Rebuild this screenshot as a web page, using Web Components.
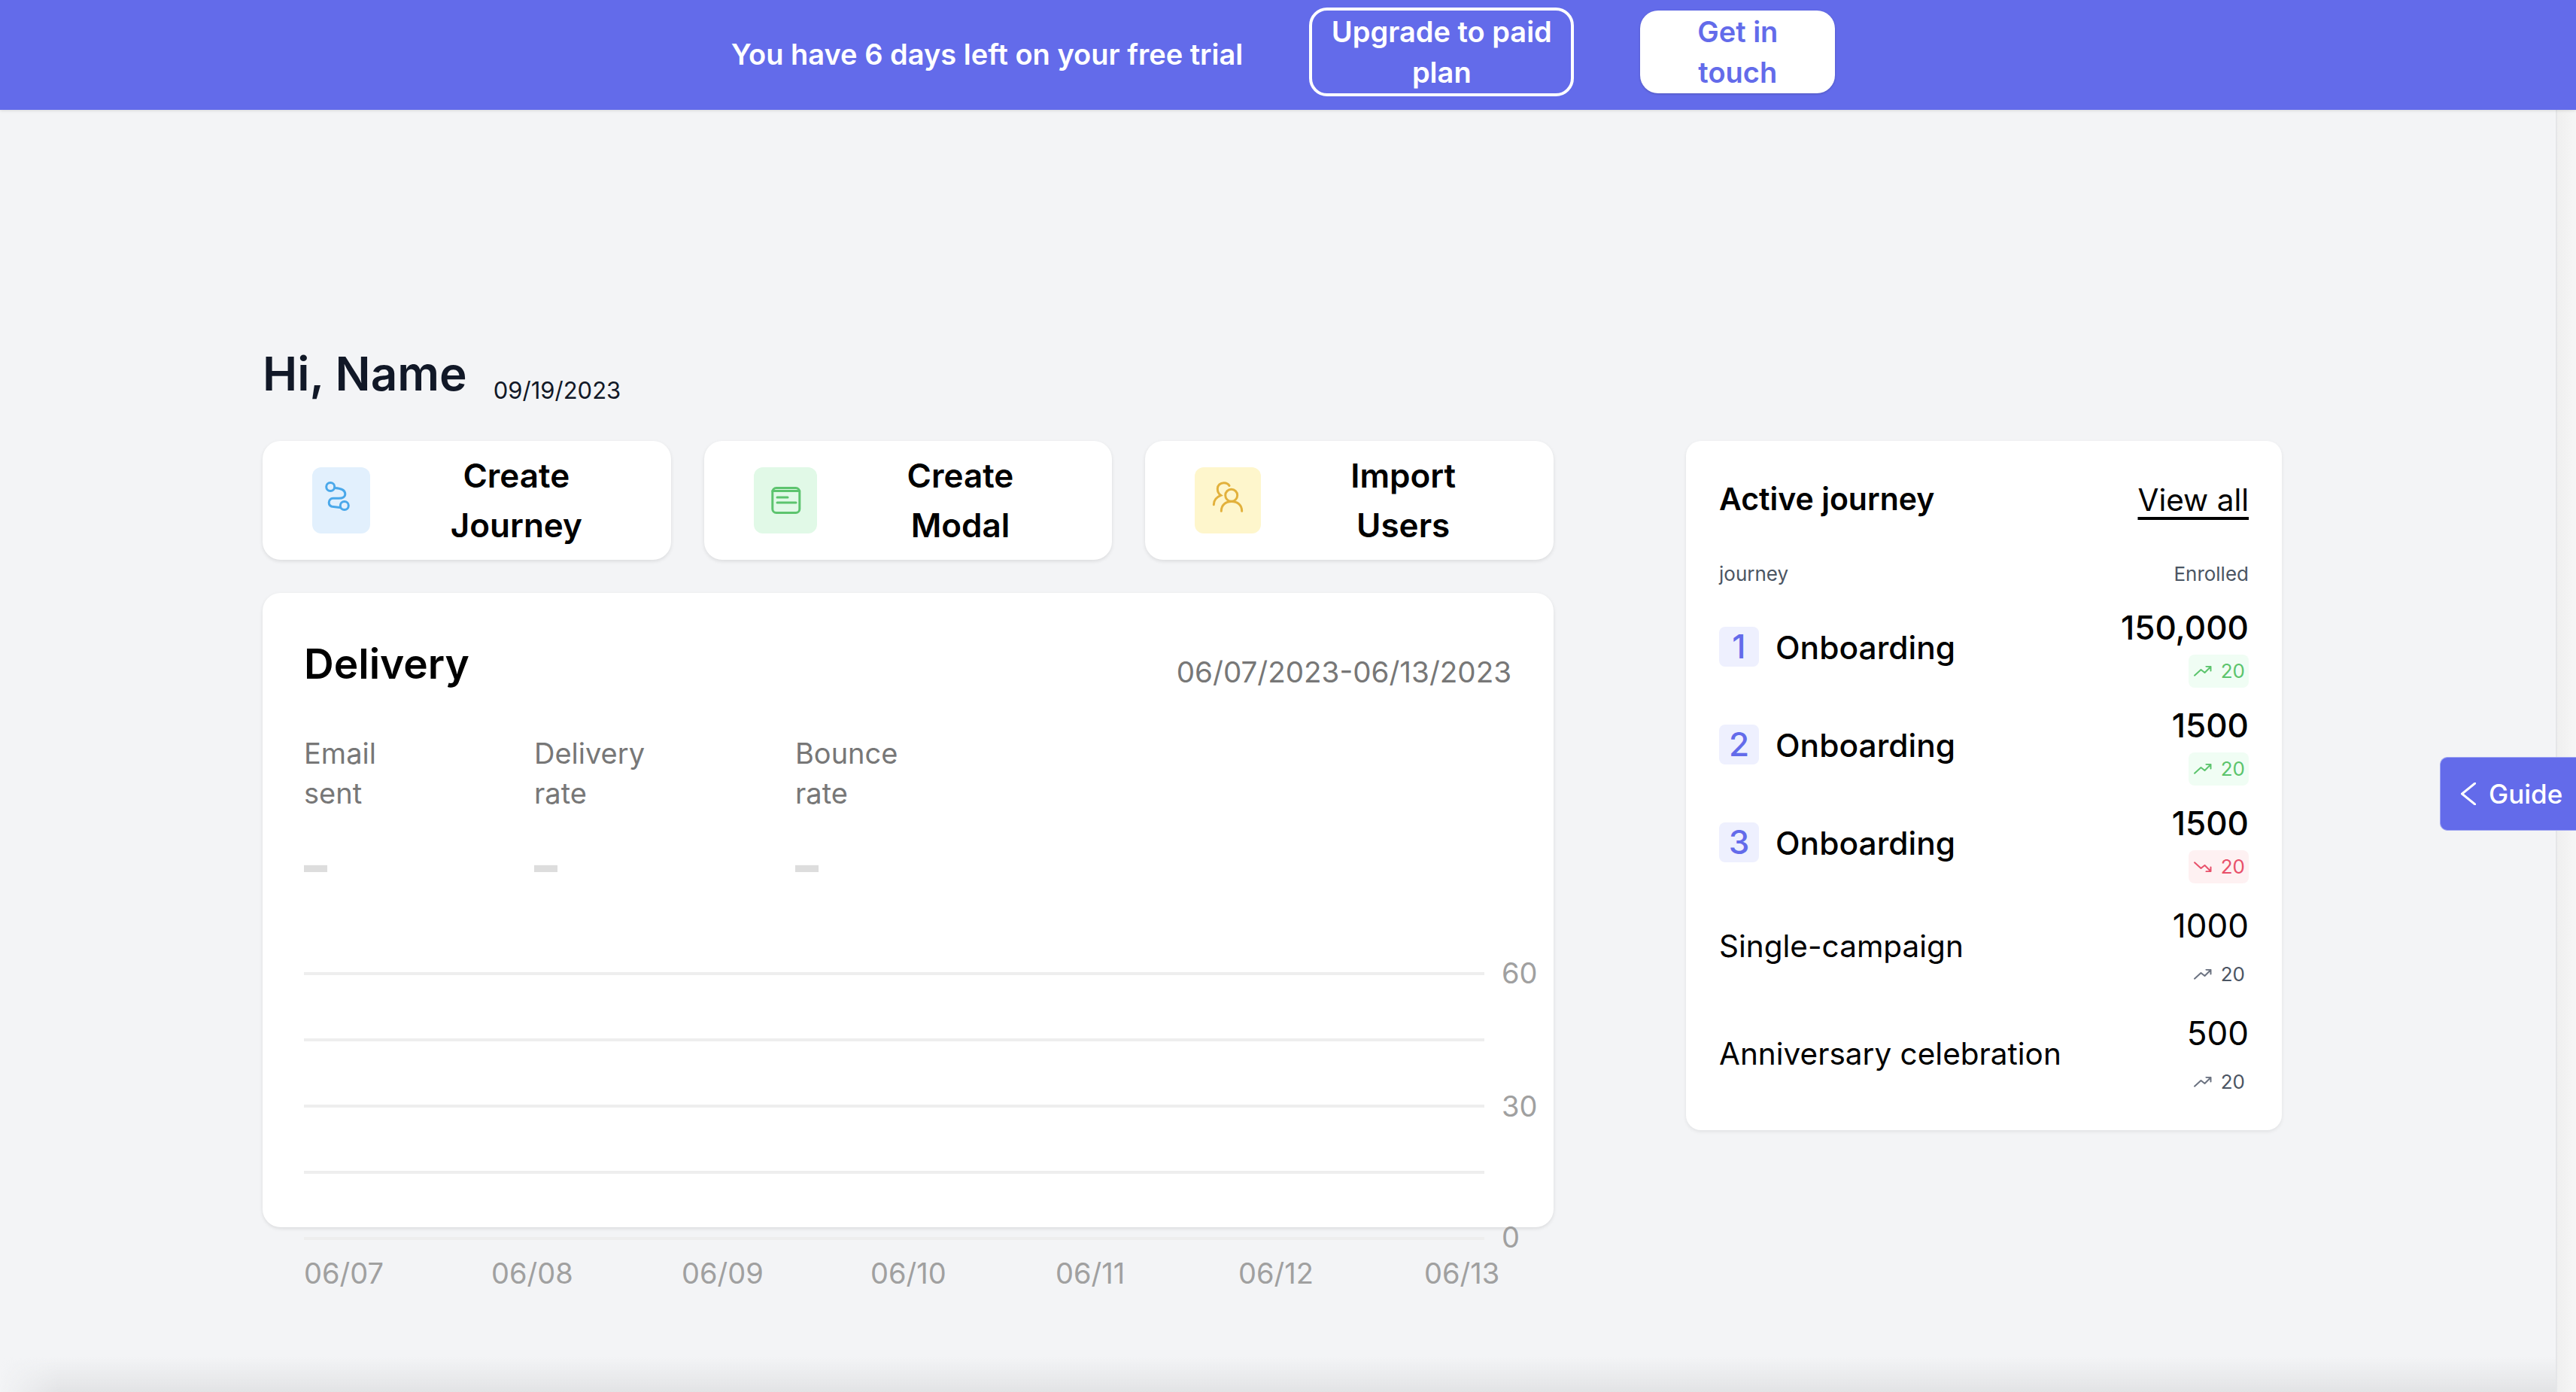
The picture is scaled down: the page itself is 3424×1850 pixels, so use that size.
<!DOCTYPE html>
<html lang="en">
<head>
<meta charset="utf-8">
<title>Dashboard</title>
<style>
  html, body { margin: 0; height: 1850px; overflow: hidden; }
  body { background: #f3f4f6; font-family: Inter, "Noto Sans", "Liberation Sans", sans-serif; color: #000; }
</style>
</head>
<body>
<trial-banner></trial-banner>
<dash-page>
  <welcome-head slot="head" date="09/19/2023">Hi, Name</welcome-head>
  <action-card slot="actions" kind="journey" tone="blue" style="--icon-w:77px">Create<br>Journey</action-card>
  <action-card slot="actions" kind="modal" tone="green" style="--icon-w:84px">Create<br>Modal</action-card>
  <action-card slot="actions" kind="users" tone="yellow" style="--icon-w:88px">Import<br>Users</action-card>
  <delivery-card slot="main" range="06/07/2023-06/13/2023">
    <stat-item style="--w:306px">Email<br>sent</stat-item>
    <stat-item style="--w:347px">Delivery<br>rate</stat-item>
    <stat-item>Bounce<br>rate</stat-item>
  </delivery-card>
  <journey-card slot="side">
    <journey-row num="1" value="150,000" trend="up">Onboarding</journey-row>
    <journey-row num="2" value="1500" trend="up">Onboarding</journey-row>
    <journey-row num="3" value="1500" trend="down">Onboarding</journey-row>
    <journey-row value="1000" trend="flat">Single-campaign</journey-row>
    <journey-row value="500" trend="flat">Anniversary celebration</journey-row>
  </journey-card>
</dash-page>
<window-edges></window-edges>
<guide-tab></guide-tab>

<script>
class TrialBanner extends HTMLElement {
  constructor() {
    super();
    this.attachShadow({ mode: "open" });
    this.shadowRoot.innerHTML = `
      <style>
        :host {
          display: flex;
          position: relative;
          z-index: 2;
          align-items: center;
          justify-content: center;
          gap: 88px;
          height: 146px;
          padding: 0 13px 8px 0;
          box-sizing: border-box;
          background: #636bea;
          box-shadow: 0 1px 4px rgba(0, 0, 0, 0.12);
          color: #fff;
          font-size: 38px;
          font-weight: 600;
          line-height: 54px;
        }
        .btn {
          box-sizing: border-box;
          text-align: center;
          border-radius: 24px;
        }
        .msg { padding-top: 6px; }
        .outline { width: 352px; border: 4px solid #fff; padding: 1px 0; }
        .solid {
          width: 259px;
          padding: 1px 0;
          background: #fff;
          color: #636bea;
          box-shadow: 0 1px 3px rgba(0, 0, 0, 0.2);
        }
      </style>
      <div class="msg">You have 6 days left on your free trial</div>
      <div class="btn outline">Upgrade to paid plan</div>
      <div class="btn solid">Get in<br>touch</div>
    `;
  }
}

class DashPage extends HTMLElement {
  constructor() {
    super();
    this.attachShadow({ mode: "open" });
    this.shadowRoot.innerHTML = `
      <style>
        :host { display: block; padding: 303px 0 0 349px; }
        .head { margin-bottom: 41px; }
        .cols { display: grid; grid-template-columns: 1716px 792px; column-gap: 176px; align-items: start; }
        .actions { display: grid; grid-template-columns: repeat(3, 1fr); gap: 44px; margin-bottom: 44px; }
      </style>
      <div class="head"><slot name="head"></slot></div>
      <div class="cols">
        <div>
          <div class="actions"><slot name="actions"></slot></div>
          <slot name="main"></slot>
        </div>
        <slot name="side"></slot>
      </div>
    `;
  }
}

class WelcomeHead extends HTMLElement {
  constructor() {
    super();
    this.attachShadow({ mode: "open" });
  }

  connectedCallback() {
    this.shadowRoot.innerHTML = `
      <style>
        :host { display: flex; align-items: flex-end; gap: 35px; color: #111827; }
        h1 { margin: 0; font-size: 62px; line-height: 96px; font-weight: 600; }
        span { font-size: 31px; line-height: 48px; margin-bottom: 2px; }
      </style>
      <h1><slot></slot></h1>
      <span>${this.getAttribute("date") || ""}</span>
    `;
  }
}

const ACTION_ICONS = {
  journey: `
    <circle cx="9.2" cy="6" r="5.5"/>
    <circle cx="27.8" cy="31" r="5.5"/>
    <path d="M15 7.5C24 8 28.8 11 28.8 15.5C28.8 19.5 25 21.3 20.5 21.3H12.5C9.5 21.3 7.2 24 7.2 27C7.2 30.5 10 32.3 13.2 32.6L21.5 33.5"/>`,
  modal: `
    <rect x="6.8" y="7.5" width="36" height="33" rx="5"/>
    <path d="M6.8 11.5H42.8"/>
    <path d="M13 20H27M13 27H38"/>`,
  users: `
    <circle cx="28.7" cy="17.3" r="8"/>
    <path d="M15.3 38.3C15.3 30 21 25.5 29 25.5C37 25.5 42.7 30 42.7 38.3"/>
    <path d="M26 4.5C24.5 1.8 21.5 .7 18.7 .7C14 .7 10.3 4 10.3 8.5C10.3 12 12 15.5 14.7 17.3C9 19.5 5.3 24 5.3 29.7"/>`
};

const TONES = {
  blue: ["#e2f0fd", "#4aa8ea"],
  green: ["#e1f9e7", "#5cc46e"],
  yellow: ["#fef6cc", "#e2b13c"]
};

class ActionCard extends HTMLElement {
  constructor() {
    super();
    this.attachShadow({ mode: "open" });
  }

  connectedCallback() {
    const [bg, fg] = TONES[this.getAttribute("tone")] || TONES.blue;
    this.shadowRoot.innerHTML = `
      <style>
        :host {
          display: flex;
          align-items: center;
          height: 158px;
          padding: 0 66px;
          box-sizing: border-box;
          gap: 55px;
          background: #fff;
          border-radius: 24px;
          box-shadow: 0 2px 5px rgba(0, 0, 0, 0.1);
          font-size: 44px;
          line-height: 66px;
          font-weight: 600;
        }
        .icon {
          flex: none;
          width: var(--icon-w, 88px);
          height: 88px;
          display: flex;
          align-items: center;
          justify-content: center;
          border-radius: 12px;
          background: ${bg};
        }
        svg { fill: none; stroke: ${fg}; stroke-width: 3; stroke-linecap: round; overflow: visible; }
        .label { flex: 1; text-align: center; }
      </style>
      <div class="icon">
        <svg width="48" height="48" viewBox="0 0 48 48">${ACTION_ICONS[this.getAttribute("kind")] || ""}</svg>
      </div>
      <div class="label"><slot></slot></div>
    `;
  }
}

class StatItem extends HTMLElement {
  constructor() {
    super();
    this.attachShadow({ mode: "open" });
    this.shadowRoot.innerHTML = `
      <style>
        :host { display: block; width: var(--w, auto); font-size: 38px; line-height: 53px; color: #777; }
        .dash { margin-top: 44px; font-size: 62px; line-height: 50px; font-weight: 900; color: #ddd; }
      </style>
      <div><slot></slot></div>
      <div class="dash">–</div>
    `;
  }
}

class DeliveryChart extends HTMLElement {
  constructor() {
    super();
    this.attachShadow({ mode: "open" });
    const grid = [24, 112, 200, 288, 376].map(
      (y) => `<rect x="0" y="${y - 2}" width="1569" height="4" fill="#eee"/>`
    ).join("");
    const ticks = [["60", 37], ["30", 214], ["0", 388]].map(
      ([t, y]) => `<text x="1592" y="${y}">${t}</text>`
    ).join("");
    const days = [["06/07", 0], ["06/08", 249], ["06/09", 502], ["06/10", 753], ["06/11", 999], ["06/12", 1242], ["06/13", 1489]];
    const labels = days.map(([t, x]) => `<text x="${x}" y="436">${t}</text>`).join("");
    this.shadowRoot.innerHTML = `
      <style>
        :host { display: block; height: 361px; }
        svg { display: block; overflow: visible; }
        text { font-size: 38px; fill: #a0a0a0; }
      </style>
      <svg width="1640" height="450" viewBox="0 0 1640 450">${grid}${ticks}${labels}</svg>
    `;
  }
}

class DeliveryCard extends HTMLElement {
  constructor() {
    super();
    this.attachShadow({ mode: "open" });
  }

  connectedCallback() {
    this.shadowRoot.innerHTML = `
      <style>
        :host {
          display: block;
          height: 843px;
          box-sizing: border-box;
          padding: 52px 56px 0 55px;
          background: #fff;
          border-radius: 24px;
          box-shadow: 0 2px 5px rgba(0, 0, 0, 0.1);
        }
        .top { display: flex; justify-content: space-between; align-items: flex-start; }
        h2 { margin: 0; font-size: 55px; line-height: 84px; font-weight: 600; }
        .range { margin-top: 25px; font-size: 38.6px; line-height: 57px; color: #777; }
        .stats { display: flex; margin-top: 51px; }
        delivery-chart { margin-top: 95px; }
      </style>
      <div class="top">
        <h2>Delivery</h2>
        <div class="range">${this.getAttribute("range") || ""}</div>
      </div>
      <div class="stats"><slot></slot></div>
      <delivery-chart></delivery-chart>
    `;
  }
}

class JourneyCard extends HTMLElement {
  constructor() {
    super();
    this.attachShadow({ mode: "open" });
    this.shadowRoot.innerHTML = `
      <style>
        :host {
          display: block;
          box-sizing: border-box;
          padding: 44px 44px 42px;
          background: #fff;
          border-radius: 20px;
          box-shadow: 0 2px 5px rgba(0, 0, 0, 0.08);
          font-size: 41px;
          line-height: 66px;
        }
        .top, .cols { display: flex; justify-content: space-between; }
        .title { font-weight: 600; }
        a { color: #000; font-size: 40.5px; margin-top: 2px; text-decoration: underline; text-decoration-thickness: 4px; text-underline-offset: 8px; }
        .cols { margin: 45px 0 17px; font-size: 26px; line-height: 39px; color: #4b5563; }
        .rows { display: flex; flex-direction: column; gap: 15px; }
      </style>
      <div class="top">
        <div class="title">Active journey</div>
        <a>View all</a>
      </div>
      <div class="cols"><span>journey</span><span>Enrolled</span></div>
      <div class="rows"><slot></slot></div>
    `;
  }
}

class JourneyRow extends HTMLElement {
  constructor() {
    super();
    this.attachShadow({ mode: "open" });
  }

  connectedCallback() {
    const num = this.getAttribute("num");
    const trend = this.getAttribute("trend") || "up";
    this.shadowRoot.innerHTML = `
      <style>
        :host {
          display: flex;
          justify-content: space-between;
          align-items: center;
          font-size: 44px;
          line-height: 66px;
        }
        :host([trend="flat"]) { margin-top: 6px; font-weight: 400; }
        .name { display: flex; align-items: center; gap: 22px; padding-top: ${num ? 6 : 3}px; }
        .num {
          width: 53px;
          height: 53px;
          border-radius: 8px;
          background: #eef0fe;
          color: #636bea;
          font-size: 44px;
          font-weight: 500;
          line-height: 53px;
          text-align: center;
        }
        .label { font-size: ${num ? 42.5 : 40.5}px; font-weight: ${num ? 500 : 400}; padding-top: ${num ? 2 : 0}px; }
        .value { display: flex; flex-direction: column; align-items: flex-end; padding-top: 2px; font-weight: ${num ? 500 : 400}; }
        trend-badge { margin-top: ${num ? 3 : 10}px; }
      </style>
      <div class="name">
        ${num ? `<div class="num">${num}</div>` : ""}
        <div class="label"><slot></slot></div>
      </div>
      <div class="value">
        <span>${this.getAttribute("value") || ""}</span>
        <trend-badge trend="${trend}">20</trend-badge>
      </div>
    `;
  }
}

class TrendBadge extends HTMLElement {
  constructor() {
    super();
    this.attachShadow({ mode: "open" });
  }

  connectedCallback() {
    const trend = this.getAttribute("trend");
    const colors = {
      up: ["#f0fdf4", "#5bc46c", "#5bc46c"],
      down: ["#fef1f2", "#e8506a", "#e8506a"],
      flat: ["transparent", "#4b5563", "#6b7280"]
    }[trend];
    const flip = trend === "down" ? ' transform="matrix(1 0 0 -1 0 14)"' : "";
    this.shadowRoot.innerHTML = `
      <style>
        :host {
          display: flex;
          align-items: center;
          width: 80px;
          height: 44px;
          box-sizing: border-box;
          padding: 0 5px 0 7px;
          justify-content: space-between;
          border-radius: 8px;
          background: ${colors[0]};
          color: ${colors[1]};
          font-size: 26px;
          line-height: 44px;
          font-weight: 400;
        }
        svg { fill: none; stroke: ${colors[2]}; stroke-width: 2; stroke-linecap: round; stroke-linejoin: round; }
      </style>
      <svg width="24" height="14" viewBox="0 0 24 14">
        <g${flip}><path d="M1 12.7L9.5 5L14.5 9L22.5 1M16.5 .8L22.5 1L22.5 6.5"/></g>
      </svg>
      <span><slot></slot></span>
    `;
  }
}

class GuideTab extends HTMLElement {
  constructor() {
    super();
    this.attachShadow({ mode: "open" });
    this.shadowRoot.innerHTML = `
      <style>
        :host {
          position: absolute;
          z-index: 3;
          left: 3243px;
          right: 0;
          top: 1006px;
          height: 98px;
          display: flex;
          align-items: center;
          box-sizing: border-box;
          padding-left: 27px;
          gap: 17px;
          border-radius: 10px 0 0 10px;
          border: 1px solid #9ea4f2;
          border-right: 0;
          background: #636bea;
          color: #fff;
          font-size: 35px;
          font-weight: 500;
        }
        svg { fill: none; stroke: #fff; stroke-width: 3; }
      </style>
      <svg width="20" height="30" viewBox="0 0 20 30"><path d="M20 0L1.5 15L20 30"/></svg>
      <span>Guide</span>
    `;
  }
}

// scrollbar strip and the shadow along the bottom of the window
class WindowEdges extends HTMLElement {
  constructor() {
    super();
    this.attachShadow({ mode: "open" });
    this.shadowRoot.innerHTML = `
      <style>
        :host { display: block; position: absolute; inset: 0; pointer-events: none; z-index: 1; }
        .bar {
          position: absolute;
          top: 0;
          bottom: 0;
          right: 0;
          width: 27px;
          border-left: 2px solid #e5e6e8;
          box-sizing: border-box;
          background: linear-gradient(to right, #efefef, #f6f6f6);
        }
        .low {
          position: absolute;
          left: 0;
          right: 27px;
          bottom: 0;
          height: 46px;
          background: linear-gradient(to bottom, rgba(227, 228, 230, 0), #e2e3e5);
          -webkit-mask-image: linear-gradient(to right, transparent, #000 80px);
        }
      </style>
      <div class="bar"></div>
      <div class="low"></div>
    `;
  }
}

customElements.define("trial-banner", TrialBanner);
customElements.define("dash-page", DashPage);
customElements.define("welcome-head", WelcomeHead);
customElements.define("action-card", ActionCard);
customElements.define("stat-item", StatItem);
customElements.define("delivery-chart", DeliveryChart);
customElements.define("delivery-card", DeliveryCard);
customElements.define("journey-card", JourneyCard);
customElements.define("journey-row", JourneyRow);
customElements.define("trend-badge", TrendBadge);
customElements.define("guide-tab", GuideTab);
customElements.define("window-edges", WindowEdges);
</script>
</body>
</html>
